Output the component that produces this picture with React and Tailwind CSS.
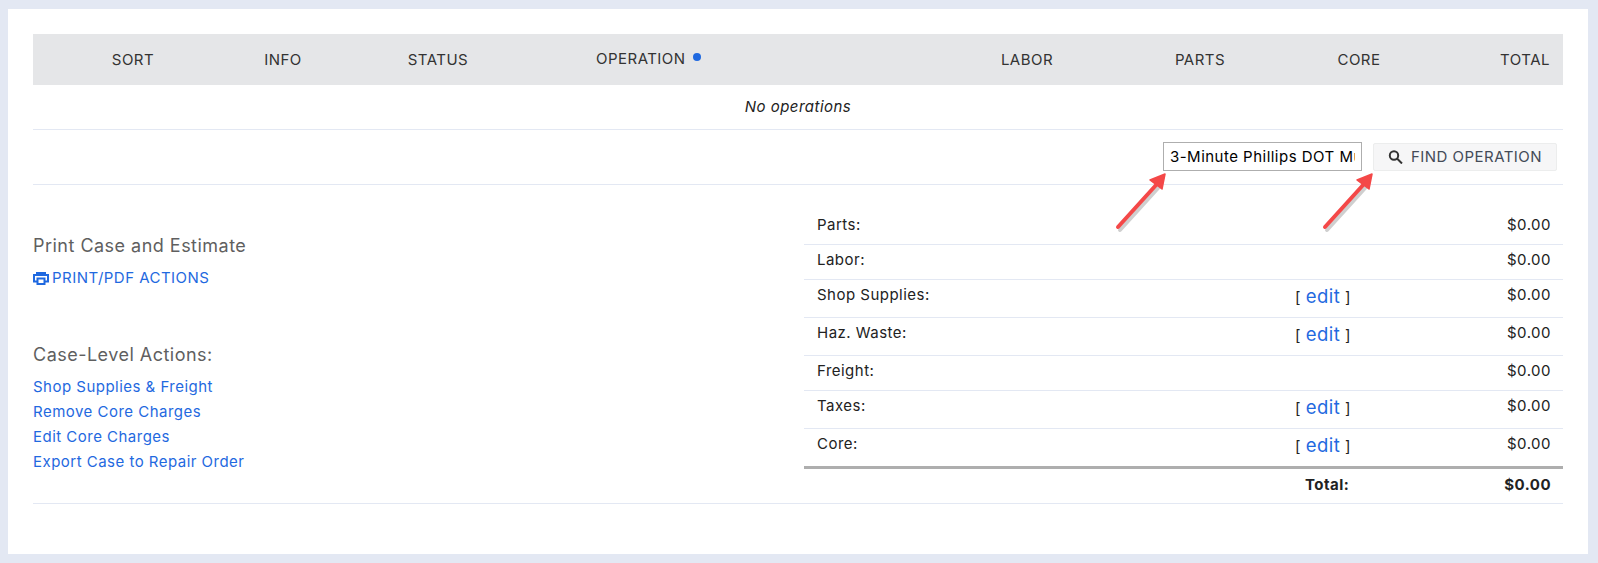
import React from 'react'

const totals = [
  { label: 'Parts:', h: 'h-[35px]' },
  { label: 'Labor:', h: 'h-[35px]' },
  { label: 'Shop Supplies:', edit: true, h: 'h-[38px]' },
  { label: 'Haz. Waste:', edit: true, h: 'h-[38px]' },
  { label: 'Freight:', h: 'h-[35px]' },
  { label: 'Taxes:', edit: true, h: 'h-[38px]' },
  { label: 'Core:', edit: true, h: 'h-[38px]' },
]

const links = ['Shop Supplies & Freight', 'Remove Core Charges', 'Edit Core Charges', 'Export Case to Repair Order']

function Arrow({ className }) {
  return (
    <svg className={className} width="60" height="64" viewBox="0 0 60 64" fill="none">
      <path d="M6 57 L45 14" stroke="#00000030" strokeWidth="4" strokeLinecap="round" transform="translate(1 2)" />
      <path d="M5 56 L44 13" stroke="#f44848" strokeWidth="4" strokeLinecap="round" />
      <path d="M52 3 L49 18 L37 9 Z" fill="#f44848" stroke="#f44848" strokeWidth="1.5" strokeLinejoin="round" />
    </svg>
  )
}

function TotalRow({ row }) {
  return (
    <div className={`grid grid-cols-[478px_1fr_auto] border-b border-[#e3e8f3] pl-[13px] pr-[12px] pt-[4px] text-[15px] ${row.h}`}>
      <span>{row.label}</span>
      <span className="pt-[2px]">
        {row.edit && (
          <span className="text-[15px]">
            [ <a className="text-[18.5px] leading-5 text-[#1f69e0]">edit</a> ]
          </span>
        )}
      </span>
      <span>$0.00</span>
    </div>
  )
}

export default function App() {
  return (
    <div className="h-[563px] bg-[#e3e8f3] pt-[9px] pl-2 pr-[10px] font-['Inter',sans-serif] tracking-[0.03em] text-[#222]">
      <div className="relative h-[545px] bg-white pl-[25px] pr-[25px] pt-[25px]">
        <div className="grid h-[51px] grid-cols-[200px_100px_210px_397px_174px_172px_146px_1fr] items-center bg-[#e5e6e8] pt-[2px] text-center text-[15px] text-[#333]">
          <span>SORT</span>
          <span>INFO</span>
          <span>STATUS</span>
          <span className="-mt-[2px] flex items-center pl-[53px]">
            OPERATION
            <span className="mb-[5px] ml-[7px] size-2 rounded-full bg-[#1f69e0]" />
          </span>
          <span>LABOR</span>
          <span>PARTS</span>
          <span>CORE</span>
          <span className="pr-[13px] text-right">TOTAL</span>
        </div>

        <div className="flex h-[45px] items-center justify-center border-b border-[#e3e8f3] text-[15px] italic">
          No operations
        </div>

        <div className="flex h-[55px] items-center justify-end gap-[11px] border-b border-[#e3e8f3] pr-[6px]">
          <input
            readOnly
            value="3-Minute Phillips DOT Multi-Use"
            className="-mt-px h-[29px] w-[199px] border border-[#aeaeae] px-[6px] text-[15px] text-black outline-none"
          />
          <button className="flex h-[28px] w-[184px] items-center justify-center gap-2 rounded-[2px] border border-[#eceded] bg-[#f6f6f7] text-[15px] text-[#444b57]">
            <svg width="15" height="14" viewBox="0 0 15 14" fill="none" stroke="#333" strokeWidth="2">
              <circle cx="6" cy="5.5" r="4.2" />
              <path d="M9 8.5l5 5" />
            </svg>
            FIND OPERATION
          </button>
        </div>

        <div className="flex h-[319px] justify-between border-b border-[#e3e8f3]">
          <div className="pt-[47px]">
            <h3 className="text-[18px] text-[#5f5f5f]">Print Case and Estimate</h3>
            <a className="mt-[8px] flex items-center gap-[3px] text-[15px] text-[#1f69e0]">
              <svg width="16" height="13" viewBox="0 0 16 13" fill="none" stroke="currentColor" strokeWidth="2">
                <path d="M4 9.5H1V3h14v6.5h-3" />
                <path d="M3 1h10" />
                <path d="M4.5 6.5h7V12h-7z" />
              </svg>
              PRINT/PDF ACTIONS
            </a>
            <h3 className="mt-[51px] text-[18px] text-[#5f5f5f]">Case-Level Actions:</h3>
            <div className="mt-[9px] flex flex-col gap-[5px] text-[15px] leading-5 text-[#1f69e0]">
              {links.map((link) => (
                <a key={link}>{link}</a>
              ))}
            </div>
          </div>

          <div className="w-[759px] pt-[25px]">
            {totals.map((row) => (
              <TotalRow key={row.label} row={row} />
            ))}
            <div className="-mt-px grid h-[36px] grid-cols-[1fr_auto] items-center border-t-[3px] border-[#aeaeae] pr-[12px] text-[15px] font-bold">
              <span className="pr-[155px] text-right">Total:</span>
              <span>$0.00</span>
            </div>
          </div>
        </div>

        <Arrow className="absolute left-[1105px] top-[162px]" />
        <Arrow className="absolute left-[1312px] top-[162px]" />
      </div>
    </div>
  )
}
